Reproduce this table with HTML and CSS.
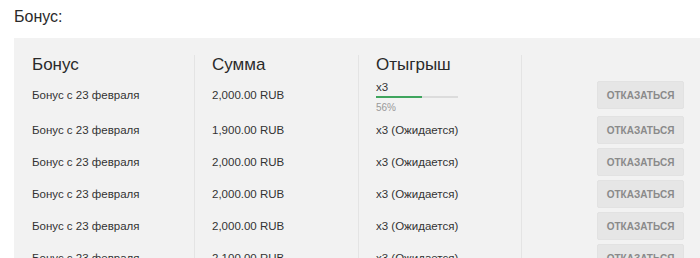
FILE: index.html
```html
<!DOCTYPE html>
<html lang="ru">
<head>
    <meta charset="UTF-8">
    <title>Бонусы</title>
    <link rel="stylesheet" href="styles.css">
</head>
<body>
    <div class="page">
        <h2 class="section-title">Бонус:</h2>

        <div class="bonus-panel">
            <div class="bonus-table">
                <div class="row head">
                    <div>Бонус</div>
                    <div>Сумма</div>
                    <div>Отыгрыш</div>
                    <div></div>
                </div>

                <div class="row">
                    <div>Бонус с 23 февраля</div>
                    <div>2,000.00 RUB</div>
                    <div class="wager">
                        <span class="wager-x">x3</span>
                        <div class="progress"><div class="progress-fill" style="width: 56%"></div></div>
                        <span class="wager-pct">56%</span>
                    </div>
                    <div class="action"><button class="btn-cancel">Отказаться</button></div>
                </div>

                <div class="row">
                    <div>Бонус с 23 февраля</div>
                    <div>1,900.00 RUB</div>
                    <div>x3 (Ожидается)</div>
                    <div class="action"><button class="btn-cancel">Отказаться</button></div>
                </div>

                <div class="row">
                    <div>Бонус с 23 февраля</div>
                    <div>2,000.00 RUB</div>
                    <div>x3 (Ожидается)</div>
                    <div class="action"><button class="btn-cancel">Отказаться</button></div>
                </div>

                <div class="row">
                    <div>Бонус с 23 февраля</div>
                    <div>2,000.00 RUB</div>
                    <div>x3 (Ожидается)</div>
                    <div class="action"><button class="btn-cancel">Отказаться</button></div>
                </div>

                <div class="row">
                    <div>Бонус с 23 февраля</div>
                    <div>2,000.00 RUB</div>
                    <div>x3 (Ожидается)</div>
                    <div class="action"><button class="btn-cancel">Отказаться</button></div>
                </div>

                <div class="row">
                    <div>Бонус с 23 февраля</div>
                    <div>2,100.00 RUB</div>
                    <div>x3 (Ожидается)</div>
                    <div class="action"><button class="btn-cancel">Отказаться</button></div>
                </div>
            </div>
        </div>
    </div>
</body>
</html>
```

FILE: styles.css
```css
body {
    margin: 0;
    background: #fff;
    font-family: 'Liberation Sans', Arial, sans-serif;
    color: #333;
}
.page {
    padding: 8px 0 0 14px;
}
.section-title {
    margin: 0 0 12px;
    font-size: 16px;
    line-height: 18px;
    font-weight: normal;
    color: #2a2a2a;
}
.bonus-panel {
    background: #f2f2f2;
    padding-top: 17px;
}
/* шапка 21px, первая строка с прогрессом 38px, остальные по 32px */
.bonus-table {
    display: grid;
    grid-template-columns: 180px 164px 163px 1fr;
    grid-template-rows: 21px 38px;
    grid-auto-rows: 32px;
}
.row {
    display: contents;
}
.row > div {
    display: flex;
    flex-direction: column;
    justify-content: center;
    min-height: 0;
    padding: 0 16px 0 18px;
    font-size: 11.5px;
    line-height: 14px;
    color: #333;
}
.row > div + div {
    border-left: 1px solid #e4e4e4;
    padding-left: 17px;
}
.row.head > div {
    justify-content: flex-start;
    font-size: 17px;
    line-height: 20px;
    color: #2a2a2a;
}
.row > .wager {
    justify-content: flex-start;
    padding-top: 4px;
}
.wager-x {
    display: block;
}
.progress {
    width: 82px;
    height: 2px;
    margin-top: 2px;
    background: #dcdcdc;
}
.progress-fill {
    height: 100%;
    background: #3fa55e;
}
.wager-pct {
    display: block;
    margin-top: 4px;
    font-size: 10px;
    line-height: 12px;
    color: #999;
}
.row > .action {
    align-items: flex-end;
}
.btn-cancel {
    width: 87px;
    height: 28px;
    padding: 0;
    border: 1px solid #e2e2e2;
    border-radius: 2px;
    background: #e6e6e6;
    color: #8a8a8a;
    font-family: 'Liberation Sans', Arial, sans-serif;
    font-size: 10px;
    font-weight: bold;
    text-transform: uppercase;
    cursor: pointer;
}
.btn-cancel:hover {
    background: #dedede;
}
```
